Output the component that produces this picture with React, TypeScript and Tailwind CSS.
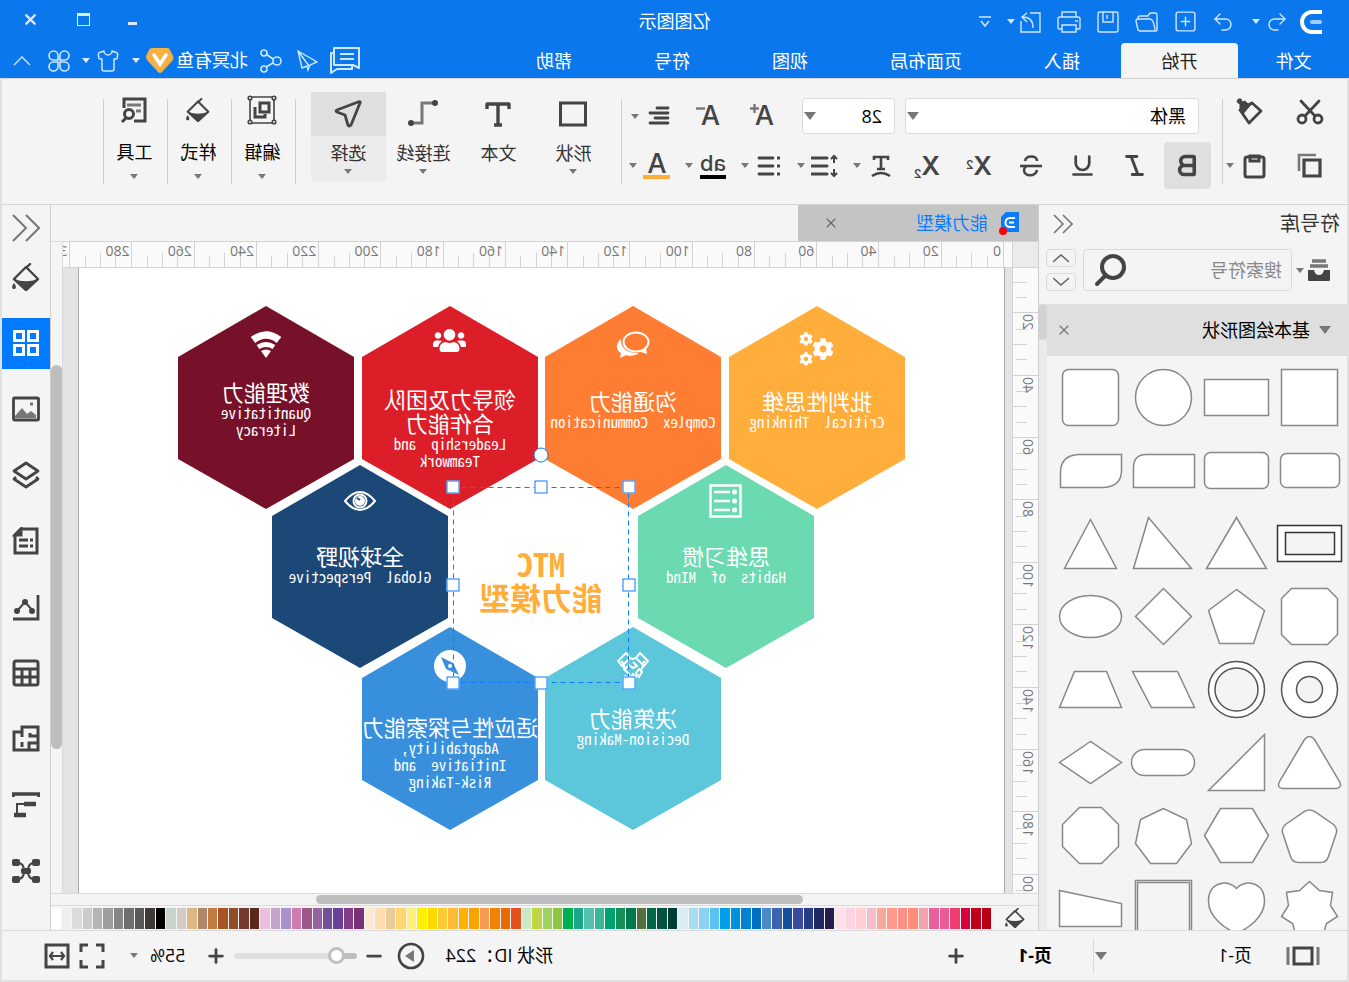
import React from 'react'
import { Bold, Italic, Underline, X, Undo2, Redo2, SquarePlus, Shirt, Plus, Minus } from 'lucide-react'
import { FaCog, FaUsers } from 'react-icons/fa'

const TABS = ['插入', '页面布局', '视图', '符号', '帮助']

const PALETTE = [
  '#b30012', '#c0001a', '#d4003b', '#ee3d6e', '#ea5a94', '#e8609a', '#f4a3ac', '#ff8d78', '#fa9088', '#ff9a8c',
  '#f7a896', '#f5bccb', '#ffcfd6', '#fcd3e4', '#fde0ea', '#241d50', '#1f2a63', '#283c86', '#3a4c9c', '#1450a0',
  '#3b63b0', '#4d88c8', '#0070c0', '#0082d0', '#0090e0', '#00a0e9', '#5cc0f0', '#8ad2f2', '#a8dcf5', '#dcecf4',
  '#003c32', '#005540', '#006848', '#54703c', '#007a4d', '#149058', '#00a070', '#38b898', '#54c0b0', '#1aa889',
  '#00b050', '#8cc63f', '#a0d060', '#bfd643', '#cbe6c8', '#e3501f', '#eb6a00', '#f08200', '#f59b55', '#f5a500',
  '#ffb000', '#ffbb35', '#fbcb35', '#ffd900', '#ffee00', '#fff07e', '#ffd572', '#ebcc98', '#ffddaf', '#fde8d2',
  '#7a3076', '#823d86', '#674296', '#74509a', '#9664a0', '#9f5789', '#cd7bb0', '#aa90cf', '#c6a3c9', '#eac0dc',
  '#5a281a', '#763930', '#924c28', '#a85324', '#c17a40', '#b3856a', '#deb887', '#d5cbc5', '#c9d3cc', '#000000',
  '#403737', '#5a5859', '#6e6e6e', '#868686', '#9d9f9e', '#b3b5b4', '#cbcdcc', '#dcdcdc', '#eeeeee', '#ffffff',
]

const Caret = ({ className = 'text-[#777]' }: { className?: string }) => (
  <svg width="8" height="5" viewBox="0 0 8 5" className={`shrink-0 ${className}`}><path d="M0 0h8L4 5z" fill="currentColor" /></svg>
)

const BigCaret = () => (
  <svg width="12" height="8" viewBox="0 0 12 8" className="shrink-0 text-[#777]"><path d="M0 0h12L6 8z" fill="currentColor" /></svg>
)

type SvgProps = { size?: number; box?: number; w?: number; className?: string; children: React.ReactNode }
const Svg = ({ size = 28, box = 28, w = 2.6, className = '', children }: SvgProps) => (
  <svg width={size} height={size} viewBox={`0 0 ${box} ${box}`} fill="none" stroke="currentColor" strokeWidth={w} className={`shrink-0 ${className}`}>
    {children}
  </svg>
)

const Bucket = ({ size = 28 }: { size?: number }) => (
  <Svg size={size} w={2.4}>
    <path d="M10 1l4 4" strokeLinecap="round" />
    <path d="M14 4L26 16 14 27 2 16z" strokeLinejoin="round" />
    <path d="M2 16c8 3 16 3 24 0L14 28z" fill="currentColor" stroke="none" />
    <path d="M26 20c-3 4-2 6 0 6s3-2 0-6z" fill="currentColor" stroke="none" />
  </Svg>
)

/* ---------- title bar ---------- */

const IconButton = ({ label, className, children }: { label: string; className?: string; children: React.ReactNode }) => (
  <button aria-label={label} className={`flex shrink-0 items-center justify-center ${className ?? ''}`}>{children}</button>
)

const TitleBar = () => (
  <header className="flex h-[78px] shrink-0 flex-col bg-[#0a78ec] text-white">
    <div className="grid h-[43px] grid-cols-[1fr_auto_1fr] items-center">
      <div className="flex items-center pl-[27px] text-[#cfe6ff]">
        <svg width="22" height="24" viewBox="0 0 22 24" className="text-white">
          <path d="M0 2h10a10 10 0 0 1 0 20H0" fill="none" stroke="currentColor" strokeWidth="4" />
          <path d="M2 12h8" stroke="#9dccff" strokeWidth="4" strokeLinecap="round" />
        </svg>
        <IconButton label="撤销" className="ml-[11px]"><Undo2 size={24} strokeWidth={1.4} /></IconButton>
        <Caret className="ml-[5px] text-[#cfe6ff]" />
        <IconButton label="重做" className="ml-[17px]"><Redo2 size={24} strokeWidth={1.4} /></IconButton>
        <IconButton label="新建" className="ml-[13px]"><SquarePlus size={25} strokeWidth={1.4} /></IconButton>
        <IconButton label="打开" className="ml-[14px]">
          <Svg size={24} box={24} w={1.4}><path d="M2 20V5q0-2 2-2h5l2 3h8q2 0 2 2v1M2 20q0 1 1 1h16l2-1 2-9q0-2-2-2H10q-2 0-3 1-2 2-3 10" /></Svg>
        </IconButton>
        <IconButton label="保存" className="ml-[15px]">
          <Svg size={24} box={24} w={1.4}><rect x="2" y="2" width="20" height="20" rx="2" /><path d="M7 2v10h10V2M13 5v4" /></Svg>
        </IconButton>
        <IconButton label="打印" className="ml-[14px]">
          <Svg size={26} box={26} w={1.4}><path d="M6 8V3h14v5M6 20H3q-1 0-1-1V10q0-2 2-2h18q2 0 2 2v9q0 1-1 1h-3M6 16h14v7H6zM4 12h3" /></Svg>
        </IconButton>
        <IconButton label="导出" className="ml-[13px]">
          <Svg size={24} box={24} w={1.4}><path d="M13 3H3v19h19V11" /><path d="M10 18c0-7 3-11 10-11M16 3l5 4-5 5" /></Svg>
        </IconButton>
        <Caret className="ml-1 text-[#cfe6ff]" />
        <IconButton label="更多" className="ml-4">
          <Svg size={12} box={12} w={1.6}><path d="M0 1h12M2 5l4 5 4-5" /></Svg>
        </IconButton>
      </div>
      <h1 className="text-[18px]">亿图图示</h1>
      <div className="flex items-center justify-end gap-[38px] pr-[22px] text-[#dcecff]">
        <IconButton label="最小化"><span className="mt-1 block h-[3px] w-[9px] bg-current" /></IconButton>
        <IconButton label="最大化"><span className="-mt-1 block size-[13px] border border-t-[3px] border-current" /></IconButton>
        <IconButton label="关闭"><X size={17} strokeWidth={3.4} className="-mt-1" /></IconButton>
      </div>
    </div>
    <div className="flex h-[35px] items-stretch justify-between">
      <nav className="flex text-[18px]">
        <button className="w-[111px] pt-[2px]">文件</button>
        <button className="w-[117px] rounded-t-sm bg-[#f4f4f4] pt-[2px] text-[#222]">开始</button>
        {TABS.map((t) => <button key={t} className="px-[41px] pt-[2px]">{t}</button>)}
      </nav>
      <div className="flex items-center pr-[13px] text-[#cfe6ff]">
        <IconButton label="评论">
          <Svg size={30} box={30} w={2}><path d="M1 22V2h25v17H7z" strokeLinejoin="round" /><path d="M26 7h3v20l-6-4H8v-4" strokeLinejoin="round" /><path d="M6 8h14M6 13h14" /></Svg>
        </IconButton>
        <IconButton label="发送" className="ml-3">
          <Svg size={22} box={22} w={1.4}><path d="M20 1L1 12l7 3 2 5 1-4 5 2zM20 1L9 16" /></Svg>
        </IconButton>
        <IconButton label="分享" className="ml-[13px]">
          <Svg size={24} box={24} w={1.6}><circle cx="6" cy="12" r="4" /><circle cx="19" cy="4" r="3" /><circle cx="19" cy="20" r="3" /><path d="M10 10l7-5M10 14l7 4" /></Svg>
        </IconButton>
        <span className="ml-[11px] text-[18px] text-white">北冥有鱼</span>
        <svg width="28" height="25" viewBox="0 0 28 25" className="ml-[2px]">
          <path d="M6 0h16q2 0 3 2l3 6q0 2-1 4L16 24q-2 2-4 0L1 12q-1-2 0-4L4 2q1-2 2-2z" fill="#f5b043" />
          <path d="M8 7l6 9 6-9" fill="none" stroke="#fff" strokeWidth="3.5" strokeLinecap="round" />
        </svg>
        <Caret className="ml-[6px] text-[#dcecff]" />
        <IconButton label="皮肤" className="ml-3"><Shirt size={24} strokeWidth={1.5} /></IconButton>
        <Caret className="ml-[6px] text-[#dcecff]" />
        <IconButton label="应用" className="ml-3">
          <Svg size={22} box={22} w={1.6}>
            <path d="M10 10H5.5A4.5 4.5 0 1 1 10 5.5zM12 10h4.5A4.5 4.5 0 1 0 12 5.5zM10 12H5.5A4.5 4.5 0 1 0 10 16.5zM12 12h4.5A4.5 4.5 0 1 1 12 16.5z" />
          </Svg>
        </IconButton>
        <IconButton label="收起" className="ml-[17px]">
          <Svg size={18} box={18} w={1.4}><path d="M1 13l8-8 8 8" /></Svg>
        </IconButton>
      </div>
    </div>
  </header>
)

/* ---------- ribbon ---------- */

const Separator = () => <div className="mt-5 h-[85px] w-px shrink-0 bg-[#cdcdcd]" />

const ToolDrop = ({ label, children }: { label: string; children: React.ReactNode }) => (
  <button aria-label={label} className="flex w-12 shrink-0 items-center">
    <span className="flex w-[30px] justify-center">{children}</span>
    <span className="flex w-[18px] justify-center"><Caret /></span>
  </button>
)

const BigTool = ({ label, active, caret = true, children }: { label: string; active?: boolean; caret?: boolean; children: React.ReactNode }) => (
  <button className={`mt-[13px] flex h-[90px] w-[75px] shrink-0 flex-col items-center rounded-sm ${active ? 'bg-[#ececec]' : ''}`}>
    <span className={`flex h-11 w-full items-center justify-center ${active ? 'bg-[#dfdfdf]' : ''}`}>{children}</span>
    <span className="mt-[5px] text-[18px] leading-6 text-[#333]">{label}</span>
    {caret && <Caret className="mt-1 text-[#777]" />}
  </button>
)

const GroupTool = ({ label, children }: { label: string; children: React.ReactNode }) => (
  <button className="mt-[13px] flex h-[90px] w-[63px] shrink-0 flex-col items-center pl-[2px]">
    <span className="flex h-9 items-center justify-center">{children}</span>
    <span className="mt-3 text-[18px] leading-6 text-black">{label}</span>
    <Caret className="mt-[10px] text-[#777]" />
  </button>
)

const Ribbon = () => (
  <section className="flex h-[127px] shrink-0 border-y border-[#d3d3d3] text-[#444]">
    <div className="w-[124px] shrink-0 pt-[13px]">
      <div className="flex h-10 items-center pl-[23px]">
        <IconButton label="剪切">
          <Svg w={2.8}><circle cx="6" cy="21" r="4" /><circle cx="22" cy="21" r="4" /><path d="M9 18L23 3M19 18L5 3" strokeLinecap="round" /></Svg>
        </IconButton>
        <IconButton label="格式刷" className="ml-8">
          <Svg w={2.8}>
            <path d="M3 13l9-8 12 7-9 13z" strokeLinejoin="round" />
            <path d="M11 4l5 2 3-3 3 1 1-3q3-1 4 2 0 2-3 3v4l-3 6z" fill="currentColor" strokeWidth="1" />
          </Svg>
        </IconButton>
      </div>
      <div className="mt-[10px] flex h-[47px] items-center pl-[23px]">
        <IconButton label="复制">
          <Svg w={3.2}><path d="M4 8h16v16H4z" /><path d="M8 3h17v16" stroke="#777" strokeWidth="2.6" /></Svg>
        </IconButton>
        <IconButton label="粘贴" className="ml-7">
          <Svg w={3}><rect x="4" y="5" width="19" height="20" rx="2" /><path d="M9 4h9v5H9z" /></Svg>
        </IconButton>
        <Caret className="ml-[6px] text-[#777]" />
      </div>
    </div>
    <Separator />
    <div className="shrink-0 pl-[11px] pr-[2px] pt-[13px]">
      <div className="flex h-12 items-center pl-3">
        <label className="relative flex items-center">
          <select aria-label="字体" className="h-9 w-[294px] appearance-none rounded-sm border border-[#dadada] bg-white pl-3 text-[18px] text-black">
            <option>黑体</option>
          </select>
          <span className="pointer-events-none absolute right-[2px]"><BigCaret /></span>
        </label>
        <label className="relative ml-[10px] flex items-center">
          <select aria-label="字号" className="h-9 w-[93px] appearance-none rounded-sm border border-[#dadada] bg-white pl-3 text-[18px] text-black">
            <option>28</option>
          </select>
          <span className="pointer-events-none absolute right-[2px]"><BigCaret /></span>
        </label>
        <button aria-label="增大字号" className="ml-[13px] flex w-[54px] items-center justify-center font-[Inter] text-[27px] font-medium leading-7">
          A<Svg size={9} box={9} w={2.4} className="-ml-1 mb-4 text-[#777]"><path d="M0 4.500h9M4.500 0v9" /></Svg>
        </button>
        <button aria-label="减小字号" className="flex w-[54px] items-center justify-center font-[Inter] text-[27px] font-medium leading-7">
          A<Svg size={9} box={9} w={2.4} className="-ml-1 mb-4 text-[#777]"><path d="M0 4.500h9" /></Svg>
        </button>
        <div className="ml-[7px]">
          <ToolDrop label="对齐">
            <Svg size={22} box={22} w={2.8}><path d="M2 3h11M2 8h18M2 13h13M2 18h18" strokeLinecap="round" /></Svg>
          </ToolDrop>
        </div>
      </div>
      <div className="mt-[2px] flex h-[47px] items-center">
        <IconButton label="加粗" className="size-[47px] rounded-sm bg-[#dfdfdf]"><Bold size={27} strokeWidth={3.2} /></IconButton>
        <IconButton label="斜体" className="ml-[3px] w-[52px]"><Italic size={27} strokeWidth={2.6} /></IconButton>
        <IconButton label="下划线" className="w-[52px]"><Underline size={27} strokeWidth={2.4} /></IconButton>
        <IconButton label="删除线" className="w-[52px]">
          <Svg w={2.6}><path d="M3 14h22" /><path d="M20 9c-1-6-12-6-12 0M8 18c1 7 13 7 13 0 0-2-1-3-2-4" /></Svg>
        </IconButton>
        <button className="w-[52px] font-[Inter] text-[26px] font-semibold leading-7">X<sup className="text-[12px]">2</sup></button>
        <button className="w-[52px] font-[Inter] text-[26px] font-semibold leading-7">X<sub className="text-[12px]">2</sub></button>
        <div className="ml-[5px] flex gap-2">
          <ToolDrop label="文字效果">
            <Svg size={24} box={24} w={2.6}><path d="M5 6V3h14v3M12 3v12M8 15h8" /><path d="M3 22q9-6 18 0" /></Svg>
          </ToolDrop>
          <ToolDrop label="行距">
            <Svg w={3}><path d="M12 6h15M12 14h15M12 22h15" strokeLinecap="round" /><path d="M5 4v7M5 17v7M2 7l3-3 3 3M2 21l3 3 3-3" strokeWidth="2" /></Svg>
          </ToolDrop>
          <ToolDrop label="项目符号">
            <Svg size={24} box={24} w={2.8}><path d="M8 4h14M8 12h14M8 20h14" strokeLinecap="round" /><path d="M1 4h3M1 12h3M1 20h3" /></Svg>
          </ToolDrop>
          <ToolDrop label="突出显示">
            <span className="border-b-4 border-black font-[Inter] text-[22px] font-medium leading-[23px]">ab</span>
          </ToolDrop>
          <ToolDrop label="字体颜色">
            <span className="w-[27px] border-b-4 border-[#ffae3b] font-[Inter] text-[27px] font-medium leading-[23px]">A</span>
          </ToolDrop>
        </div>
      </div>
    </div>
    <Separator />
    <div className="ml-[10px] mr-[15px] flex shrink-0">
      <BigTool label="形状">
        <Svg w={3}><rect x="1.5" y="3" width="25" height="22" /></Svg>
      </BigTool>
      <BigTool label="文本" caret={false}>
        <Svg w={3.4}><path d="M3 9V4h22v5M14 4v21M10 25h8" strokeLinejoin="round" /></Svg>
      </BigTool>
      <BigTool label="连接线">
        <Svg size={30} box={30} w={3}>
          <path d="M4 4h12v20h9" stroke="#777" /><circle cx="3" cy="4" r="3" fill="currentColor" stroke="none" /><circle cx="27" cy="24" r="3" fill="currentColor" stroke="none" />
        </Svg>
      </BigTool>
      <BigTool label="选择" active>
        <Svg w={2.8}><path d="M2 3q-1-2 2-1l21 8q2 1 0 2l-8 3-3 10q-1 2-3 0z" strokeLinejoin="round" /></Svg>
      </BigTool>
    </div>
    <Separator />
    <GroupTool label="编辑">
      <Svg size={30} box={30} w={1.6}>
        <path d="M3 2h24v26H3z" /><g fill="#f4f4f4"><circle cx="3" cy="3" r="1.8" /><circle cx="27" cy="3" r="1.8" /><circle cx="3" cy="27" r="1.8" /><circle cx="27" cy="27" r="1.8" /></g>
        <path d="M8 8h9v9H8z" strokeWidth="3" /><path d="M22 12v10H12v-3" strokeWidth="3" />
      </Svg>
    </GroupTool>
    <Separator />
    <GroupTool label="样式"><Bucket size={24} /></GroupTool>
    <Separator />
    <GroupTool label="工具">
      <Svg w={3}><path d="M14 25H3V3h21v9" /><path d="M7 9h14M7 15h5" stroke="#777" /><circle cx="19" cy="18" r="4.5" /><path d="M22 22l4 4" /></Svg>
    </GroupTool>
    <Separator />
  </section>
)

/* ---------- symbol library ---------- */

const BG = '#f4f4f4'
const SHAPES: React.ReactNode[] = [
  <rect x="-28" y="-28" width="56" height="56" />,
  <rect x="-32" y="-18" width="64" height="36" />,
  <circle r="28" />,
  <rect x="-28" y="-28" width="56" height="56" rx="6" />,
  <rect x="-30" y="-17" width="59" height="34" rx="6" />,
  <rect x="-32" y="-18" width="64" height="36" rx="6" />,
  <path d="M-31-16H17q13 0 13 13V17H-31z" />,
  <path d="M-31-16H12Q30-15 30 2V17H-13Q-31 16-31 0z" />,
  <g stroke="#333"><rect x="-32" y="-18" width="64" height="36" /><rect x="-25" y="-11" width="49" height="22" fill={BG} /></g>,
  <path d="M0-26L30 25H-30z" />,
  <path d="M15-26L30 25H-28z" />,
  <path d="M0-24L26 25H-26z" />,
  <path d="M-18-28H18L28-18V18L18 28H-18L-28 18V-18z" />,
  <path d="M0-27L28-6 17 27H-17L-28-6z" />,
  <path d="M0-28L28 0 0 28-28 0z" />,
  <ellipse rx="31" ry="21" />,
  <g stroke="#555"><circle r="28" /><circle r="13" fill={BG} /></g>,
  <g stroke="#555"><circle r="28" /><circle r="21.5" fill={BG} /></g>,
  <path d="M31-18H-14L-31 18H12z" />,
  <path d="M-16-18H16L31 18H-31z" />,
  <path d="M-5-23Q0-29 5-23L30 19Q33 25 27 26H-27Q-33 25-30 19z" />,
  <path d="M-28-28V28H28z" />,
  <rect x="-31" y="-13" width="63" height="26" rx="13" />,
  <path d="M0-21L31 0 0 21-31 0z" />,
  <path d="M-5-24Q0-27 5-24L24-11Q28-7 27-3L19 21Q17 27 11 27H-11Q-17 27-19 21L-27-3Q-28-7-24-11z" />,
  <path d="M-32 0L-16-27H16L32 0 16 27H-16z" />,
  <path d="M0-27L23-16 28 8 13 28H-13L-28 8-23-16z" />,
  <path d="M-11-28H11L28-11V11L11 28H-11L-28 11V-11z" />,
  <path d="M0-27L10-18 23-16 21-3 28 8 17 15 13 28 0 23-13 28-17 15-28 8-21-3-23-16-10-18z" />,
  <path d="M0-20C7-29 28-28 28-7 28 8 12 20 0 25-12 20-28 8-28-7-28-28-7-29 0-20z" />,
  <g><rect x="-28" y="-28" width="56" height="56" /><rect x="-26" y="-26" width="52" height="52" fill={BG} /></g>,
  <path d="M31-18L-31-5V18H31z" />,
]

const SymbolPanel = () => (
  <aside className="flex w-[309px] shrink-0 flex-col border-r border-[#cdcdcd]">
    <div className="flex h-9 shrink-0 items-center justify-between pl-[7px] pr-[14px] pt-px">
      <h2 className="text-[20px] text-[#333]">符号库</h2>
      <IconButton label="折叠"><Svg size={20} box={20} w={1.6} className="text-[#777]"><path d="M10 1l-9 9 9 9M19 1l-9 9 9 9" /></Svg></IconButton>
    </div>
    <div className="flex h-[63px] shrink-0 items-start pl-[15px] pt-2">
      <IconButton label="符号分类" className="h-[42px]">
        <svg width="26" height="24" viewBox="0 0 26 24"><path d="M6 3h14M4 8h18" stroke="#777" strokeWidth="3.4" /><path d="M2 12h6q1 5 5 5t5-5h6v10q0 1-1 1H3q-1 0-1-1z" fill="#444" /></svg>
      </IconButton>
      <span className="flex h-[42px] items-center pl-[2px] pr-1"><Caret /></span>
      <label className="flex h-[42px] w-[209px] items-center rounded-sm border border-[#dadada] pl-[9px] pr-[10px]">
        <input aria-label="搜索符号" placeholder="搜索符号" className="w-full min-w-0 bg-transparent text-[18px] outline-none placeholder:text-[#888]" />
        <Svg size={33} box={33} w={4} className="text-[#444]"><circle cx="14" cy="13" r="11" /><path d="M21 21l9 9" strokeLinecap="round" /></Svg>
      </label>
      <div className="ml-[7px] flex flex-col gap-[6px]">
        <IconButton label="上一个" className="h-[18px] w-[30px] rounded-sm border border-[#dadada]"><Svg size={16} box={16} w={1.6} className="text-[#666]"><path d="M0 12l8-7 8 7" /></Svg></IconButton>
        <IconButton label="下一个" className="h-[18px] w-[30px] rounded-sm border border-[#dadada]"><Svg size={16} box={16} w={1.6} className="text-[#666]"><path d="M0 4l8 7 8-7" /></Svg></IconButton>
      </div>
    </div>
    <div className="flex min-h-0 flex-1">
      <div className="flex min-w-0 flex-1 flex-col overflow-hidden">
        <div className="flex h-[52px] shrink-0 items-center bg-[#dfdfdf] pl-4 pr-[9px]">
          <BigCaret />
          <h3 className="ml-[9px] flex-1 text-[18px] text-black">基本绘图形状</h3>
          <IconButton label="关闭分类"><X size={16} strokeWidth={1.8} className="text-[#777]" /></IconButton>
        </div>
        <div className="grid grid-cols-4 pl-px pr-[7px] pt-[5px]">
          {SHAPES.map((s, i) => (
            <svg key={i} viewBox="-36.5 -36.5 73 73" className="aspect-square w-full" fill="#fff" stroke="#888" strokeWidth="1.5">{s}</svg>
          ))}
        </div>
      </div>
      <div className="w-2 shrink-0 bg-[#ebebeb]"><div className="h-9 rounded-full bg-[#d2d2d2]" /></div>
    </div>
  </aside>
)

/* ---------- rulers and canvas ---------- */

const HRuler = () => (
  <div className="flex-1 overflow-hidden bg-[#fafafa] pl-2">
    <div className="grid h-full w-[996px] grid-cols-16">
      {Array.from({ length: 16 }, (_, i) => (
        <div key={i} className="relative grid grid-cols-4 items-end border-l border-[#d3d3d3]">
          <span className="absolute left-[2px] top-0 text-[14px] leading-[18px] text-[#777]">{i * 20}</span>
          <i />
          <i className="h-[11px] border-l border-[#d3d3d3]" />
          <i className="h-[14px] border-l border-[#d3d3d3]" />
          <i className="h-[11px] border-l border-[#d3d3d3]" />
        </div>
      ))}
    </div>
  </div>
)

const VRuler = () => (
  <div className="w-[26px] shrink-0 overflow-hidden border-r border-[#d3d3d3] bg-[#fafafa]">
    <div className="-mt-[18px] grid h-[686px] grid-rows-11">
      {Array.from({ length: 11 }, (_, i) => (
        <div key={i} className="relative grid grid-rows-4 justify-end border-t border-[#d3d3d3]">
          {i > 0 && <span className="absolute left-px top-px rotate-180 text-[14px] leading-[18px] text-[#777] [writing-mode:vertical-rl]">{i * 20}</span>}
          <i />
          <i className="w-[11px] border-t border-[#d3d3d3]" />
          <i className="w-[14px] border-t border-[#d3d3d3]" />
          <i className="w-[11px] border-t border-[#d3d3d3]" />
        </div>
      ))}
    </div>
  </div>
)

const Gears = () => (
  <div className="flex items-center">
    <FaCog size={22} />
    <div className="-ml-px flex flex-col gap-[6px]"><FaCog size={14} /><FaCog size={14} /></div>
  </div>
)

type Hex = { x: number; y: number; color: string; iconTop: number; textTop: number; title: string; sub: string; icon: React.ReactNode }
const HEXES: Hex[] = [
  { x: 99, y: 38, color: '#ffae3b', iconTop: 26, textTop: 83, title: '批判性思维', sub: 'Critical  Thinking', icon: <Gears /> },
  {
    x: 283, y: 38, color: '#ff7c33', iconTop: 25, textTop: 83, title: '沟通能力', sub: 'Complex  Communication',
    icon: <svg width="34" height="28" viewBox="0 0 34 28"><ellipse cx="14" cy="11" rx="12.5" ry="9.5" fill="none" stroke="#fff" strokeWidth="2" /><path d="M4 17l-1 6 6-2z M29 8c7 6 4 12 0 14l1 5-6-3c-5 2-11 0-13-2 12 1 19-6 18-14z" fill="#fff" /></svg>,
  },
  { x: 466, y: 38, color: '#dc1e28', iconTop: 18, textTop: 81, title: '领导力及团队\n合作能力', sub: 'Leadership  and\nTeamwork', icon: <FaUsers size={33} /> },
  {
    x: 650, y: 38, color: '#771029', iconTop: 25, textTop: 74, title: '数理能力', sub: 'Quantitative\nLiteracy',
    icon: <svg width="32" height="27" viewBox="0 0 32 27" fill="none" stroke="#fff"><path d="M3 9q13-10 26 0" strokeWidth="7.5" /><path d="M8 16q8-5 16 0" strokeWidth="5" /><path d="M11 20q5-3 10 0l-5 7z" fill="#fff" stroke="none" /></svg>,
  },
  {
    x: 190, y: 197, color: '#6bdab0', iconTop: 19, textTop: 79, title: '思维习惯', sub: 'Habits  of  MInd',
    icon: <svg width="33" height="34" viewBox="0 0 33 34" fill="none" stroke="#fff" strokeWidth="2.5"><path d="M1.500 1.500h30v31h-30z" /><path d="M12 8h16M12 17h16M12 26h16" /><g fill="#fff" stroke="none"><circle cx="7.5" cy="8" r="2.5" /><circle cx="7.5" cy="17" r="2.5" /><circle cx="7.5" cy="26" r="2.5" /></g></svg>,
  },
  {
    x: 556, y: 197, color: '#1c4877', iconTop: 26, textTop: 79, title: '全球视野', sub: 'Global  Perspective',
    icon: <svg width="32" height="20" viewBox="0 0 32 20" fill="none" stroke="#fff" strokeWidth="2"><path d="M1 10q15-18 30 0-15 18-30 0z" /><circle cx="16" cy="10" r="6.5" /><circle cx="16" cy="10" r="4" fill="#fff" /><path d="M16 9l3-2" stroke="#1c4877" /></svg>,
  },
  {
    x: 283, y: 359, color: '#5cc6db', iconTop: 25, textTop: 79, title: '决策能力', sub: 'Decision-Making',
    icon: <svg width="32" height="30" viewBox="0 0 32 30" fill="none" stroke="#fff" strokeWidth="2"><path d="M1 9l8-8 4 5-8 8zM31 9l-8-8-4 5 8 8zM4 9l3 3M28 9l-3 3M13 6l3 1 4-1M25 13v4l-6 6M6 14l2 4M16 10l-4 4 4 2 4-3 5 5M7 20l3-3 3 4-3 4zM13 25l3-3 2 3-2 3zM19 26l6-2" /></svg>,
  },
  {
    x: 466, y: 359, color: '#3890dd', iconTop: 22, textTop: 88, title: '适应性与探索能力', sub: 'Adaptability,\nInitiative  and\nRisk-Taking',
    icon: <svg width="34" height="34" viewBox="0 0 34 34"><circle cx="17" cy="17" r="16" fill="#fff" /><path d="M26 8l-5 12L8 26l6-12z" fill="#3890dd" /><circle cx="17" cy="17" r="2" fill="#fff" /></svg>,
  },
]

const HANDLES = ['left-0 top-0', 'left-1/2 top-0', 'left-full top-0', 'left-0 top-1/2', 'left-full top-1/2', 'left-0 top-full', 'left-1/2 top-full', 'left-full top-full']

const Canvas = () => (
  <div className="min-w-0 flex-1 overflow-hidden bg-[#e4e4e4] pl-[7px] pr-[15px]">
    <div className="relative h-full border-x border-[#aaa] bg-white">
      {HEXES.map((h) => (
        <div key={h.title} className="absolute h-[203px] w-[176px] text-white" style={{ left: h.x, top: h.y }}>
          <svg viewBox="0 0 176 203" className="absolute inset-0" fill={h.color}><path d="M88 0l88 51v102l-88 50-88-50V51z" /></svg>
          <div className="absolute inset-x-0 flex justify-center" style={{ top: h.iconTop }}>{h.icon}</div>
          <div className="absolute inset-x-0 flex flex-col items-center text-center whitespace-pre" style={{ top: h.textTop }}>
            <p className="text-[22px] leading-6">{h.title}</p>
            <p className="font-['Noto_Sans_CJK_SC'] text-[15px] leading-[17px] [font-feature-settings:'hwid']">{h.sub}</p>
          </div>
        </div>
      ))}
      <div className="absolute left-[375px] top-[219px] h-[196px] w-[176px]">
        <svg width="176" height="196" className="absolute inset-0 overflow-visible"><rect x="0.5" y="0.5" width="175" height="195" fill="none" stroke="#0a7cff" strokeDasharray="5 4" /></svg>
        <p className="pt-[59px] text-center font-bold text-[#ffae3b]">
          <span className="block font-['Noto_Sans_CJK_SC'] text-[32px] leading-[35px] [font-feature-settings:'hwid']">MTC</span>
          <span className="block text-[31px] leading-[35px]">能力模型</span>
        </p>
        {HANDLES.map((p) => <span key={p} className={`absolute size-[13px] -translate-1/2 border border-[#0a7cff] bg-white ${p}`} />)}
        <span className="absolute left-1/2 -top-8 size-[15px] -translate-1/2 rounded-full border border-[#0a7cff] bg-white" />
      </div>
    </div>
  </div>
)

const Workspace = () => (
  <main className="flex min-w-0 flex-1 flex-col">
    <div className="flex h-9 shrink-0">
      <div className="flex w-[240px] items-center bg-[#c4c4c4] pl-[18px] pr-[25px]">
        <svg width="24" height="24" viewBox="0 0 24 24" className="shrink-0">
          <path d="M1 1h13l5 5v15H1z" fill="#0a7cff" /><path d="M5 7h5a4.500 4.500 0 0 1 0 9H5M6 11.500h5" fill="none" stroke="#fff" strokeWidth="2" /><circle cx="17" cy="20" r="4" fill="#f00" />
        </svg>
        <span className="ml-2 flex-1 text-[18px] text-[#0a7cff]">能力模型</span>
        <IconButton label="关闭文档"><X size={16} strokeWidth={1.6} className="text-[#666]" /></IconButton>
      </div>
    </div>
    <div className="flex min-h-0 flex-1">
      <div className="flex min-w-0 flex-1 flex-col">
        <div className="flex h-[27px] shrink-0 border-y border-[#d3d3d3]">
          <div className="w-[26px] shrink-0 border-r border-[#d3d3d3] bg-[#ebebeb]" />
          <HRuler />
        </div>
        <div className="flex min-h-0 flex-1">
          <VRuler />
          <Canvas />
        </div>
      </div>
      <div className="w-3 shrink-0 border-l border-t border-[#dadada] pt-[123px]"><div className="h-[384px] rounded-full bg-[#bebebe]" /></div>
    </div>
    <div className="h-[13px] shrink-0 border-y border-[#dadada] pl-[235px] pt-px"><div className="h-[9px] w-[487px] rounded-full bg-[#bebebe]" /></div>
    <div className="flex h-6 shrink-0 items-center">
      <span className="flex w-[47px] shrink-0 items-center justify-center pr-px text-[#444]"><Bucket size={20} /></span>
      <div className="flex h-[21px] flex-1 gap-px">
        {PALETTE.map((c, i) => <button key={i} aria-label={c} className="flex-1" style={{ background: c }} />)}
      </div>
    </div>
  </main>
)

/* ---------- side tools ---------- */

const SIDE: { label: string; active?: boolean; icon: React.ReactNode }[] = [
  { label: '填充', icon: <Bucket /> },
  {
    label: '布局', active: true,
    icon: <Svg w={3}><path d="M2.500 2.500h9v9h-9zM16.500 2.500h9v9h-9zM2.500 16.500h9v9h-9zM16.500 16.500h9v9h-9z" /></Svg>,
  },
  {
    label: '图片',
    icon: <Svg w={2.8}><rect x="1.5" y="3" width="25" height="22" rx="1" /><path d="M4 23v-3l5-4 4 3 5-6 7 8v2z" fill="#777" stroke="none" /><path d="M7 9h3" stroke="#777" strokeWidth="3" /></Svg>,
  },
  { label: '图层', icon: <Svg w={2.8}><path d="M14 2l12 8-12 8L2 10zM4 16l-2 2 12 8 12-8-2-2" strokeLinejoin="round" /></Svg> },
  {
    label: '页面',
    icon: <Svg w={3}><path d="M3 2h16l6 6v18H3z" /><path d="M19 2v6h6z" fill="currentColor" /><path d="M7 13h3M12 13h9M7 19h3M12 19h9" /></Svg>,
  },
  {
    label: '图表',
    icon: <Svg w={2.8}><path d="M2 2v24h25" /><path d="M7 18l8-9 8 9" strokeWidth="2" /><g fill="currentColor" stroke="none"><circle cx="8" cy="18" r="3" /><circle cx="15" cy="9" r="3" /><circle cx="23" cy="18" r="3" /></g></Svg>,
  },
  { label: '表格', icon: <Svg w={3}><rect x="2" y="2" width="24" height="24" rx="2" /><path d="M2 10h24M2 18h24M10 10v16M18 10v16" /></Svg> },
  { label: '平面图', icon: <Svg w={3}><path d="M2 2h16v5h8v18H2zM2 11h8V8M2 18h9v7M18 7v5M18 17v5" /></Svg> },
  { label: '甘特图', icon: <Svg w={2}><path d="M1 6V3h26v3" strokeWidth="3.5" /><path d="M4 13h12M14 24h12" strokeWidth="4.5" /><path d="M15 13h8v10" /></Svg> },
  {
    label: '思维导图',
    icon: <Svg w={2}><path d="M6 6q6 0 6 8 0 8-6 8M22 6q-6 0-6 8 0 8 6 8" /><g fill="currentColor" stroke="none"><rect x="0" y="2" width="8" height="7" rx="2" /><rect x="20" y="2" width="8" height="7" rx="2" /><rect x="0" y="19" width="8" height="7" rx="2" /><rect x="20" y="19" width="8" height="7" rx="2" /><rect x="9" y="11" width="10" height="6" rx="2" /></g></Svg>,
  },
]

const SideTools = () => (
  <aside className="flex w-[49px] shrink-0 flex-col border-l border-[#cdcdcd] text-[#444]">
    <IconButton label="展开" className="h-[39px] pt-[6px] text-[#777]"><Svg size={28} w={2}><path d="M14 1L1 14l13 13M27 1L14 14l13 13" /></Svg></IconButton>
    {SIDE.map((s) => (
      <div key={s.label} className="flex h-[66px] shrink-0 items-center">
        <IconButton label={s.label} className={`h-[51px] w-full ${s.active ? 'bg-[#007bff] text-white' : ''}`}>{s.icon}</IconButton>
      </div>
    ))}
  </aside>
)

/* ---------- status bar ---------- */

const StatusBar = () => (
  <footer className="flex h-[50px] shrink-0 items-center justify-between border-t border-[#dadada] text-[18px] text-black">
    <div className="flex items-center pl-[27px]">
      <IconButton label="页面视图">
        <svg width="34" height="20" viewBox="0 0 34 20" fill="none"><path d="M2 1v18M32 1v18" stroke="#777" strokeWidth="3" /><rect x="8" y="2" width="18" height="16" stroke="#444" strokeWidth="3" /></svg>
      </IconButton>
      <button className="ml-[34px] flex w-[157px] items-center justify-between"><span>页-1</span><BigCaret /></button>
      <div className="mx-px h-9 w-px bg-[#dadada]" />
      <button className="ml-10 font-bold">页-1</button>
      <IconButton label="添加页面" className="ml-[51px] text-[#444]"><Plus size={22} strokeWidth={3} /></IconButton>
    </div>
    <div className="flex items-center pr-[41px] text-[#444]">
      <span className="whitespace-nowrap text-black">形状 ID：224</span>
      <IconButton label="播放" className="ml-5">
        <Svg w={2.6}><circle cx="14" cy="14" r="12" /><path d="M11 8v12l9-6z" fill="#777" stroke="none" /></Svg>
      </IconButton>
      <IconButton label="缩小" className="ml-3"><Minus size={22} strokeWidth={3} /></IconButton>
      <input
        type="range" aria-label="缩放" defaultValue={12}
        className="ml-[6px] h-[6px] w-[123px] appearance-none rounded-full bg-linear-to-r from-[#bebebe] from-12% to-[#dfdfdf] to-12% [&::-webkit-slider-thumb]:size-[17px] [&::-webkit-slider-thumb]:appearance-none [&::-webkit-slider-thumb]:rounded-full [&::-webkit-slider-thumb]:border-[3px] [&::-webkit-slider-thumb]:border-[#bebebe] [&::-webkit-slider-thumb]:bg-white"
      />
      <IconButton label="放大" className="ml-[7px]"><Plus size={22} strokeWidth={3} /></IconButton>
      <span className="ml-5 text-black">55%</span>
      <Caret className="ml-3 text-[#777]" />
      <IconButton label="全屏" className="ml-6">
        <Svg w={3}><path d="M3 10V3h7M18 3h7v7M25 18v7h-7M10 25H3v-7" /></Svg>
      </IconButton>
      <IconButton label="适应宽度" className="ml-[7px]">
        <Svg w={3}><rect x="3" y="3" width="22" height="22" /><path d="M8 14h12M10 10l-3 4 3 4M18 10l3 4-3 4" strokeWidth="2.2" /></Svg>
      </IconButton>
    </div>
  </footer>
)

// The whole editor is shown flipped left to right.
export default function App() {
  return (
    <div className="flex h-screen -scale-x-100 flex-col overflow-hidden bg-[#f4f4f4] font-['Open_Sans','Noto_Sans_CJK_SC',sans-serif]">
      <TitleBar />
      <div className="flex min-h-0 flex-1 flex-col border-x-2 border-b-2 border-[#e0e0e0]">
        <Ribbon />
        <div className="flex min-h-0 flex-1">
          <SymbolPanel />
          <Workspace />
          <SideTools />
        </div>
        <StatusBar />
      </div>
    </div>
  )
}
